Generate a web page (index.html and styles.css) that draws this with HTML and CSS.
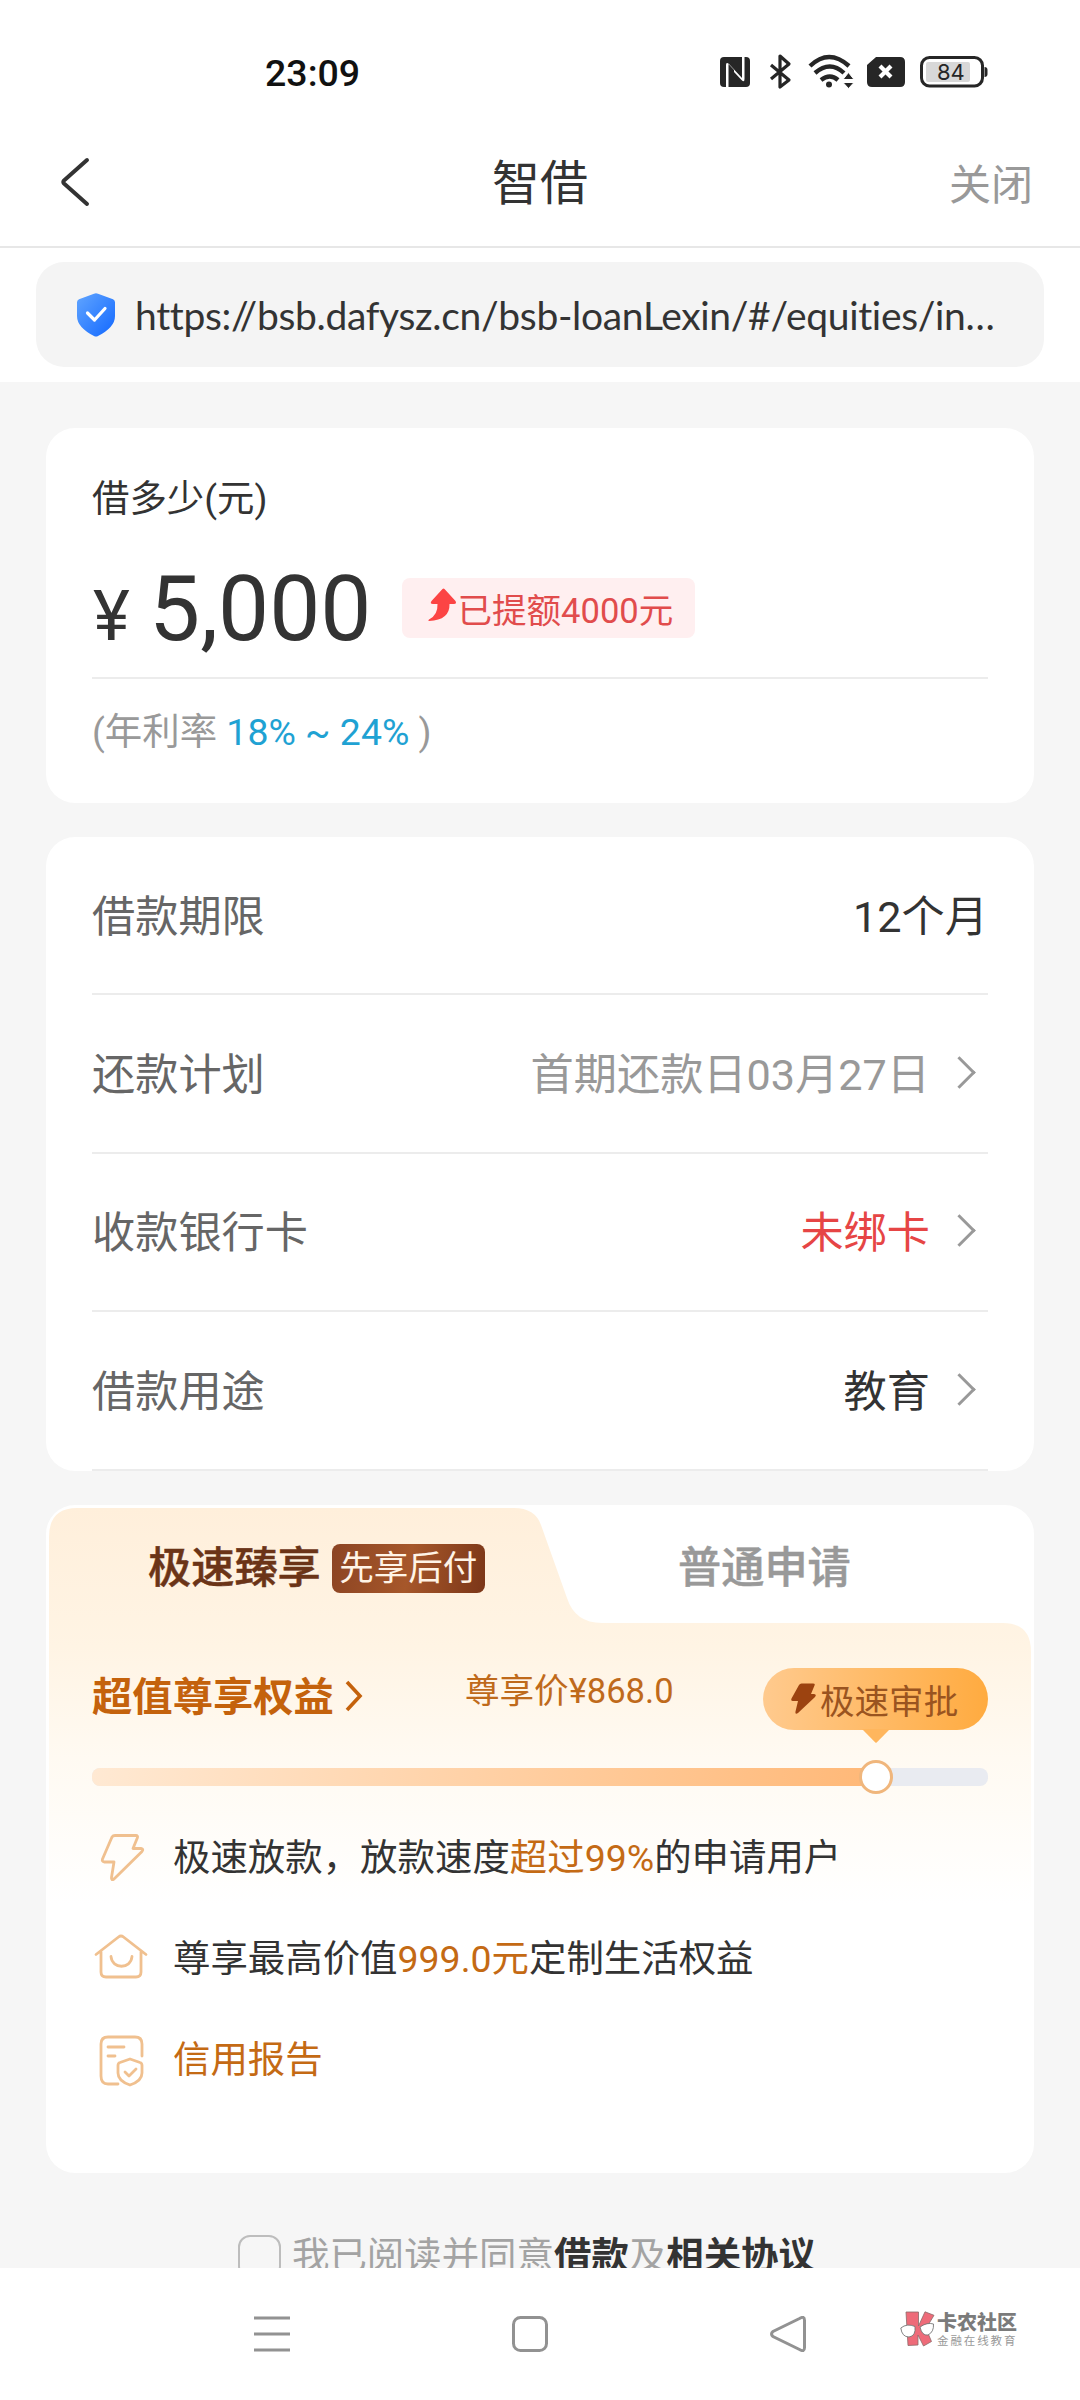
FILE: index.html
```html
<!DOCTYPE html>
<html lang="zh-CN">
<head>
<meta charset="utf-8">
<title>智借</title>
<link rel="stylesheet" href="styles.css">
</head>
<body>
<div class="phone">
  <header class="status-bar">
    <span class="clock">23:09</span>
    <svg class="status-icons" viewBox="0 0 276 46" width="276" height="46">
      <g fill="#262626">
        <g transform="translate(-4 0)">
          <rect x="4" y="11" width="30" height="30" rx="4"/>
          <path d="M10 41V19q0-3.500 3-1L26 32V11h2.500V33q0 4-3 1L18 26V24l-5.500-6V41z" fill="#fff"/>
          <path d="M55 19l18 15-9 7V10l9 8-18 15" fill="none" stroke="#262626" stroke-width="3.200" stroke-linejoin="round"/>
          <g fill="none" stroke="#262626" stroke-width="4.400">
            <path d="M94 20Q113 2 133 20"/>
            <path d="M99 27Q114 14 128 27"/>
            <path d="M105 34Q114 27 122 34"/>
          </g>
          <circle cx="113" cy="38.500" r="3"/>
          <path d="M127 33.500h11l-5.500-7zM127 36.500h11l-5.500 6z" stroke="#fff" stroke-width="1"/>
        </g>
        <path d="M156 11h24q5 0 5 5v20q0 5-5 5h-28q-5 0-5-5V19z"/>
        <path d="M160 20l11 11m0-11l-11 11" stroke="#fff" stroke-width="4.200"/>
        <rect x="201.500" y="11.500" width="61" height="28.500" rx="8" fill="#fff" stroke="#262626" stroke-width="3"/>
        <rect x="206" y="16" width="44" height="20" rx="2" fill="#d8d8d8"/>
        <path d="M264.500 21q3 0 3 3v4q0 3-3 3z"/>
        <text x="217" y="34" class="battery-text">84</text>
      </g>
    </svg>
  </header>

  <nav class="title-bar">
    <svg class="back" viewBox="0 0 32 52" width="32" height="52"><path d="M28 4L5 24.500q-1.500 1.500 0 3L28 48" fill="none" stroke="#333" stroke-width="4" stroke-linecap="round" stroke-linejoin="round"/></svg>
    <h1>智借</h1>
    <span class="close">关闭</span>
  </nav>

  <div class="url-area">
    <div class="url-pill">
      <svg viewBox="0 0 38 44" width="38" height="44">
        <defs><linearGradient id="shield" x1="0" y1="0" x2="1" y2="1"><stop offset="0" stop-color="#61a5ff"/><stop offset="1" stop-color="#1268ff"/></linearGradient></defs>
        <path d="M17 .7q2-1 4 0l15 5.500q2 .8 2 3V23q0 6-4.500 11T21 43q-2 1-4 0Q9 39 4.500 34T0 23V9.200q0-2.200 2-3z" fill="url(#shield)"/>
        <path d="M10.500 20l7 7L28 15.500" fill="none" stroke="#fff" stroke-width="3.200" stroke-linecap="round" stroke-linejoin="round"/>
      </svg>
      <span class="url">https://bsb.dafysz.cn/bsb-loanLexin/#/equities/in…</span>
    </div>
  </div>

  <main class="content">
    <section class="card amount-card">
      <div class="amount-label">借多少(元)</div>
      <div class="amount-row">
        <span class="yen">¥</span>
        <span class="amount">5,000</span>
        <span class="raise-tag">
          <svg viewBox="0 0 30 34" width="30" height="34"><path d="M15.500 1Q16.500 0 17.500 1L28.500 13q1.500 3-1.500 3h-4.500Q23 32 2 33q-1.500-.5 0-1.500Q11 27 10.500 16H6q-3.500 0-1.500-3z" fill="#fc4444"/></svg>已提额4000元
        </span>
      </div>
      <div class="rate">(年利率 <span class="rate-value">18% ~ 24%</span> )</div>
    </section>

    <section class="card detail-card">
      <div class="row"><span>借款期限</span><span class="value dark">12个月</span></div>
      <div class="row"><span>还款计划</span><span class="value muted">首期还款日03月27日<i class="chevron"></i></span></div>
      <div class="row"><span>收款银行卡</span><span class="value red">未绑卡<i class="chevron"></i></span></div>
      <div class="row"><span>借款用途</span><span class="value dark">教育<i class="chevron"></i></span></div>
    </section>

    <section class="card plan-card">
      <svg class="plan-bg" viewBox="0 0 988 400" width="988" height="400">
        <defs><linearGradient id="peach" x1="0" y1="0" x2="0" y2="1"><stop offset="0" stop-color="#ffefdb"/><stop offset=".35" stop-color="#fff4e4"/><stop offset=".63" stop-color="#fffaf2"/><stop offset="1" stop-color="#ffffff"/></linearGradient></defs>
        <path d="M3 400V32Q3 3 31 3H468Q489 3 495 20L521 93Q529 118 556 118H957Q985 118 985 147V400z" fill="url(#peach)"/>
      </svg>
      <div class="tabs">
        <div class="tab tab-active"><span>极速臻享</span><span class="badge">先享后付</span></div>
        <div class="tab tab-plain">普通申请</div>
      </div>
      <div class="benefit">
        <span class="benefit-title">超值尊享权益<svg viewBox="0 0 20 32" width="20" height="32"><path d="M3 2L16 16 3 30" fill="none" stroke="#c4620c" stroke-width="3.600"/></svg></span>
        <span class="price">尊享价¥868.0</span>
        <span class="bubble"><svg viewBox="0 0 26 32" width="26" height="32"><path d="M9 2q.8-1.500 2.500-1.500H23q2.500 0 1.500 2L21 11h3q3 .5 1 3L8 30q-3 2-2.500-1.500L8 18H3q-2.500 0-1.500-2.500z" fill="#9c4310"/></svg>极速审批</span>
      </div>
      <div class="track"><div class="fill"></div><div class="thumb"></div></div>
      <ul class="perks">
        <li>
          <svg viewBox="0 0 58 58" width="58" height="58"><path d="M23 7.500h21q2 0 1.500 2L41 20.500h8q3 .5 1 3L22 51q-3 2-2.500-1.500L22 34H12.500q-3-.5-2-3L20 9q1-1.500 3-1.500z"/></svg>
          <span>极速放款，放款速度<em>超过99%</em>的申请用户</span>
        </li>
        <li>
          <svg viewBox="0 0 58 58" width="58" height="58"><path d="M4 25.500L26.500 8q2.500-2 5 0L54 25.500M9 23v20q0 5 5 5h30q5 0 5-5V23M19 27.500c1 13 20 13 21 0"/></svg>
          <span>尊享最高价值<em>999.0元</em>定制生活权益</span>
        </li>
        <li>
          <svg viewBox="0 0 58 58" width="58" height="58"><path d="M26 54H16Q9 54 9 46V14Q9 7 16 7H43q7 0 7 7V26M16 17H32M16 26h7M38 29l10 3.500q2 .5 2 3V43q0 8-12 12-12-4-12-12v-7.500q0-2.500 2-3zM33 42l4 4 7-7"/></svg>
          <span><em>信用报告</em></span>
        </li>
      </ul>
    </section>

    <div class="consent"><i class="checkbox"></i><span>我已阅读并同意<b>借款</b>及<b>相关协议</b></span></div>
  </main>

  <footer class="nav-bar">
    <svg viewBox="0 0 36 36" width="36" height="36"><path d="M0 2h36M0 18h36M0 34h36"/></svg>
    <svg viewBox="0 0 36 36" width="36" height="36"><rect x="1.500" y="1.500" width="33" height="33" rx="7"/></svg>
    <svg viewBox="0 0 36 36" width="36" height="36"><path d="M29.500 2.500Q34.500-.5 34.500 4.500v27q0 5-5 2L3 20.500q-3-2.500 0-5z"/></svg>
    <div class="brand">
      <svg viewBox="0 0 36 36" width="36" height="36">
        <g fill="#ee6b79" stroke="#8b6b6b" stroke-width=".8"><path d="M6 1h12.500V15L25 .8l9 3.500-8 13.200 5.500 13-8 4.500-5.500-11V34L8 34.500z"/></g>
        <g fill="#fff" stroke="#777" stroke-width=".9"><path d="M.8 17Q7 12 15 15.500 16 25 9 26 2 26 .8 17zM20 16q7-5 13.500-3Q34 21 28 24q-6 1-8-8z"/></g>
      </svg>
      <div class="brand-text"><strong>卡农社区</strong><small>金融在线教育</small></div>
    </div>
  </footer>
</div>
</body>
</html>
```
FILE: styles.css
```css
* { box-sizing: border-box; margin: 0; padding: 0; }

body {
  width: 1080px;
  height: 2400px;
  overflow: hidden;
  background: #fff;
  color: #333;
  font-family: Roboto, "Noto Sans CJK SC", sans-serif;
}

i, em { font-style: normal; }

.phone {
  display: flex;
  flex-direction: column;
  height: 2400px;
}

/* system status */
.status-bar {
  display: flex;
  justify-content: space-between;
  height: 110px;
  padding: 40px 84px 0 265px;
}

.clock {
  height: 66px;
  line-height: 66px;
  color: #111;
  font-size: 37.500px;
  font-weight: 500;
}

.status-icons { margin-top: 6px; }

.battery-text {
  font-family: Inter, sans-serif;
  font-size: 22px;
}

/* title */
.title-bar {
  display: grid;
  grid-template-columns: 1fr auto 1fr;
  align-items: center;
  height: 138px;
  padding: 7px 47px 0 59px;
  border-bottom: 2px solid #e7e7e7;
}

.title-bar h1 {
  padding-top: 5px;
  color: #333;
  font-size: 48px;
  font-weight: 400;
  line-height: 72px;
  margin-left: -12px;
}

.close {
  justify-self: end;
  padding-bottom: 1px;
  color: #999;
  font-size: 42px;
}

/* address */
.url-area {
  height: 134px;
  padding: 14px 36px 0;
}

.url-pill {
  display: flex;
  align-items: center;
  gap: 20px;
  height: 105px;
  padding-left: 41px;
  border-radius: 28px;
  background: #f4f4f4;
}

.url {
  color: #333;
  font-family: Lato, sans-serif;
  font-size: 39px;
  letter-spacing: -.32px;
  white-space: nowrap;
}

/* page content */
.content {
  display: flex;
  flex-direction: column;
  height: 1886px;
  padding: 46px 46px 0;
  background: #f6f6f6;
  overflow: hidden;
}

.card {
  flex: none;
  border-radius: 29px;
  background: #fff;
}

.amount-card {
  height: 375px;
  padding: 43px 46px 0;
}

.amount-label {
  height: 56px;
  line-height: 56px;
  font-size: 37.440px;
}

.amount-row {
  display: flex;
  align-items: baseline;
  height: 152px;
  padding-top: 29px;
  border-bottom: 2px solid #ececec;
}

.yen { margin-left: 1px; font-size: 70px; line-height: 100px; width: 56px; }

.amount { font-size: 91px; line-height: 106px; }

.raise-tag {
  display: flex;
  align-items: center;
  align-self: flex-start;
  width: 293px;
  height: 60px;
  margin: 22px 0 0 31px;
  padding-left: 25px;
  border-radius: 8px;
  background: #ffeff0;
  color: #e14c4c;
  font-size: 34.560px;
  white-space: nowrap;
}

.raise-tag svg { margin: -6px 0 0; flex: none; }

.rate {
  height: 106px;
  line-height: 106px;
  color: #999;
  font-size: 37.440px;
}

.rate-value { color: #1fa2d3; }

.detail-card {
  height: 634px;
  margin-top: 34px;
  padding: 0 46px;
}

.row {
  display: flex;
  align-items: center;
  justify-content: space-between;
  height: 158.400px;
  padding-bottom: 5px;
  border-bottom: 2px solid #ececec;
  color: #666;
  font-size: 43.200px;
}

.value { display: flex; align-items: center; }
.value.dark { color: #333; }
.value.muted { color: #999; }
.value.red { color: #e64545; }

.chevron {
  width: 23px;
  height: 23px;
  margin: 3px 17px 0 18px;
  border: solid #999;
  border-width: 3px 3px 0 0;
  transform: rotate(45deg);
}

/* plan */
.plan-card {
  position: relative;
  height: 668px;
  margin-top: 34px;
  padding: 0 46px;
}

.plan-bg { position: absolute; left: 0; top: 0; }

.tabs {
  position: relative;
  display: flex;
  height: 122px;
  font-size: 43.200px;
  font-weight: 500;
  -webkit-text-stroke: .5px currentColor;
}

.tab { display: flex; align-items: center; height: 117px; }

.tab-active {
  width: 500px;
  padding-left: 56px;
  gap: 11px;
  color: #6b3417;
}

.badge {
  width: 153px;
  height: 49px;
  margin-top: 9px;
  border-radius: 8px;
  background: linear-gradient(100deg, #8c4423, #a6572a 50%, #7b3618);
  color: #fff4e6;
  font-size: 34.560px;
  font-weight: 400;
  line-height: 49px;
  text-align: center;
  -webkit-text-stroke: 0;
}

.tab-plain { padding-left: 86px; color: #999; }

.benefit {
  position: relative;
  display: flex;
  height: 141px;
  padding-top: 41px;
}

.benefit-title {
  display: flex;
  align-items: center;
  gap: 10px;
  width: 373px;
  height: 51px;
  color: #c4620c;
  font-size: 40.320px;
  font-weight: 600;
}

.benefit-title svg { margin-top: 4px; }

.price {
  height: 46px;
  line-height: 46px;
  color: #bf6a1b;
  font-size: 34.560px;
}

.bubble {
  position: relative;
  display: flex;
  align-items: center;
  width: 225px;
  height: 62px;
  margin-left: auto;
  padding: 0 0 1px 27px;
  gap: 4px;
  border-radius: 31px;
  background: linear-gradient(90deg, #ffca8e, #ffab40);
  color: #9a5420;
  font-size: 34.560px;
  white-space: nowrap;
}

.bubble::after {
  content: "";
  position: absolute;
  left: 99px;
  top: 61px;
  width: 28px;
  height: 14px;
  background: #ffb65d;
  clip-path: polygon(0 0, 100% 0, 56% 90%, 50% 100%, 44% 90%);
}

.track {
  position: relative;
  height: 18px;
  border-radius: 8px;
  background: #e9ebf1;
}

.fill {
  width: 784px;
  height: 18px;
  border-radius: 8px 0 0 8px;
  background: linear-gradient(90deg, #ffe9d3, #ffb877);
}

.thumb {
  position: absolute;
  left: 767px;
  top: -8px;
  width: 34px;
  height: 34px;
  border: 3px solid #f0b67c;
  border-radius: 50%;
  background: #fff;
}

.perks {
  position: relative;
  padding-top: 20px;
  list-style: none;
}

.perks li {
  display: flex;
  align-items: center;
  gap: 23px;
  height: 101px;
  font-size: 37.440px;
  white-space: nowrap;
}

.perks li span { padding-bottom: 4px; }

.perks svg { fill: none; stroke: #f0c08f; stroke-width: 2.800; stroke-linecap: round; stroke-linejoin: round; }

.perks em { color: #c46a14; }

/* agreement */
.consent {
  display: flex;
  flex: none;
  gap: 11px;
  height: 56px;
  margin-top: 55px;
  padding-left: 192px;
  color: #a3a3a3;
  font-size: 37.440px;
  line-height: 56px;
  white-space: nowrap;
}

.consent b { color: #333; font-weight: 600; }

.checkbox {
  width: 43px;
  height: 43px;
  margin-top: 7px;
  border: 2px solid #bdbdbd;
  border-radius: 12px;
}

/* system navigation */
.nav-bar {
  display: flex;
  height: 132px;
  padding: 48px 0 0 254px;
  gap: 222px;
}

.nav-bar > svg { flex: none; fill: none; stroke: #929292; stroke-width: 3; }

.brand { display: flex; gap: 1px; margin: -5px 0 0 -128px; height: 40px; }

.brand-text { display: flex; flex-direction: column; padding-top: 1px; color: #7b7b7b; }

.brand-text strong { font-size: 20px; font-weight: 900; line-height: 23px; }

.brand-text small { font-size: 11.500px; line-height: 12px; letter-spacing: 1.900px; color: #999; }
```
